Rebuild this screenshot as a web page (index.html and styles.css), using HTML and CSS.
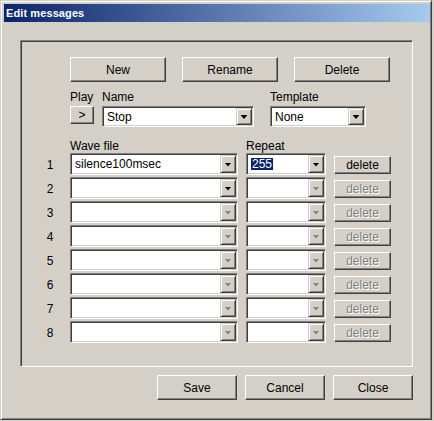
FILE: index.html
```html
<!DOCTYPE html>
<html>
<head>
<meta charset="utf-8">
<link rel="stylesheet" href="styles.css">
</head>
<body>
<div class="window">
  <div class="titlebar"><span class="title">Edit messages</span></div>
  <div class="group">
    <div class="toolbar">
      <button class="btn btn-big">New</button>
      <button class="btn btn-big">Rename</button>
      <button class="btn btn-big">Delete</button>
    </div>
    <div class="fields">
      <div class="field f-play">
        <div class="label">Play</div>
        <button class="btn btn-play">&gt;</button>
      </div>
      <div class="field f-name">
        <div class="label">Name</div>
        <div class="combo combo-top"><span class="combo-text">Stop</span><span class="drop"><span class="arrow"></span></span></div>
      </div>
      <div class="field f-template">
        <div class="label">Template</div>
        <div class="combo combo-top"><span class="combo-text">None</span><span class="drop"><span class="arrow"></span></span></div>
      </div>
    </div>
    <div class="list-head">
      <span class="h-wave">Wave file</span>
      <span class="h-repeat">Repeat</span>
    </div>
    <div class="rows">
      <div class="row">
        <span class="num">1</span>
        <div class="combo c-wave"><span class="combo-text">silence100msec</span><span class="drop"><span class="arrow"></span></span></div>
        <div class="combo c-repeat"><span class="combo-text"><span class="sel">255</span></span><span class="drop"><span class="arrow"></span></span></div>
        <button class="btn btn-del">delete</button>
      </div>
      <div class="row">
        <span class="num">2</span>
        <div class="combo c-wave"><span class="combo-text"></span><span class="drop"><span class="arrow"></span></span></div>
        <div class="combo c-repeat"><span class="combo-text"></span><span class="drop"><span class="arrow off"></span></span></div>
        <button class="btn btn-del disabled">delete</button>
      </div>
      <div class="row">
        <span class="num">3</span>
        <div class="combo c-wave"><span class="combo-text"></span><span class="drop"><span class="arrow off"></span></span></div>
        <div class="combo c-repeat"><span class="combo-text"></span><span class="drop"><span class="arrow off"></span></span></div>
        <button class="btn btn-del disabled">delete</button>
      </div>
      <div class="row">
        <span class="num">4</span>
        <div class="combo c-wave"><span class="combo-text"></span><span class="drop"><span class="arrow off"></span></span></div>
        <div class="combo c-repeat"><span class="combo-text"></span><span class="drop"><span class="arrow off"></span></span></div>
        <button class="btn btn-del disabled">delete</button>
      </div>
      <div class="row">
        <span class="num">5</span>
        <div class="combo c-wave"><span class="combo-text"></span><span class="drop"><span class="arrow off"></span></span></div>
        <div class="combo c-repeat"><span class="combo-text"></span><span class="drop"><span class="arrow off"></span></span></div>
        <button class="btn btn-del disabled">delete</button>
      </div>
      <div class="row">
        <span class="num">6</span>
        <div class="combo c-wave"><span class="combo-text"></span><span class="drop"><span class="arrow off"></span></span></div>
        <div class="combo c-repeat"><span class="combo-text"></span><span class="drop"><span class="arrow off"></span></span></div>
        <button class="btn btn-del disabled">delete</button>
      </div>
      <div class="row">
        <span class="num">7</span>
        <div class="combo c-wave"><span class="combo-text"></span><span class="drop"><span class="arrow off"></span></span></div>
        <div class="combo c-repeat"><span class="combo-text"></span><span class="drop"><span class="arrow off"></span></span></div>
        <button class="btn btn-del disabled">delete</button>
      </div>
      <div class="row">
        <span class="num">8</span>
        <div class="combo c-wave"><span class="combo-text"></span><span class="drop"><span class="arrow off"></span></span></div>
        <div class="combo c-repeat"><span class="combo-text"></span><span class="drop"><span class="arrow off"></span></span></div>
        <button class="btn btn-del disabled">delete</button>
      </div>
    </div>
  </div>
  <div class="footer">
    <button class="btn btn-foot">Save</button>
    <button class="btn btn-foot">Cancel</button>
    <button class="btn btn-foot">Close</button>
  </div>
</div>
</body>
</html>
```

FILE: styles.css
```css
html, body {
  margin: 0;
  padding: 0;
  background: #d4d0c8;
}
body {
  font-family: "Liberation Sans", Arial, sans-serif;
  font-size: 12px;
  color: #000;
}
.window {
  box-sizing: border-box;
  width: 432px;
  height: 420px;
  background: #d4d0c8;
  border: 1px solid;
  border-color: #d4d0c8 #404040 #404040 #d4d0c8;
  box-shadow: inset 1px 1px #fff, inset -1px -1px #808080;
  padding: 3px 1px 0 3px;
}
.titlebar {
  height: 18px;
  background: linear-gradient(to right, #0a246a, #a6caf0);
  display: flex;
  align-items: center;
  padding-left: 2px;
}
.title {
  color: #fff;
  font-weight: bold;
  font-size: 11px;
  letter-spacing: 0.1px;
  line-height: 18px;
}
.group {
  box-sizing: border-box;
  margin: 18px 0 0 16px;
  width: 393px;
  height: 327px;
  border: 1px solid;
  border-color: #808080 #fff #fff #808080;
  box-shadow: inset 1px 1px #404040, inset -1px -1px #d4d0c8;
  padding: 16px 0 0 21px;
}
.btn {
  box-sizing: border-box;
  font-family: "Liberation Sans", Arial, sans-serif;
  font-size: 12px;
  color: #000;
  background: #d4d0c8;
  border: 1px solid;
  border-color: #fff #404040 #404040 #fff;
  box-shadow: inset -1px -1px #808080;
  padding: 0;
  margin: 0;
  display: flex;
  align-items: center;
  justify-content: center;
}
.toolbar {
  display: flex;
  gap: 16px;
  margin-left: 28px;
}
.btn-big {
  width: 96px;
  height: 25px;
}
.fields {
  display: flex;
  margin-left: 28px;
  margin-top: 8px;
}
.field {
  display: flex;
  flex-direction: column;
}
.label {
  line-height: 14px;
  height: 14px;
  margin-bottom: 2px;
}
.f-play { width: 32px; }
.f-name { width: 152px; margin-right: 16px; }
.f-template { width: 96px; }
.btn-play {
  width: 24px;
  height: 18px;
}
.combo {
  box-sizing: border-box;
  display: flex;
  height: 22px;
  background: #fff;
  border: 1px solid;
  border-color: #808080 #fff #fff #808080;
  box-shadow: inset 1px 1px #404040, inset -1px -1px #d4d0c8;
  padding: 1px;
}
.combo-top { height: 21px; }
.combo-text {
  flex: 1;
  display: flex;
  align-items: center;
  padding-left: 3px;
  white-space: nowrap;
  overflow: hidden;
}
.sel {
  background: #0a246a;
  color: #fff;
  padding: 0 1px;
  line-height: 12px;
}
.drop {
  box-sizing: border-box;
  width: 16px;
  flex: none;
  background: #d4d0c8;
  border: 1px solid;
  border-color: #d4d0c8 #404040 #404040 #d4d0c8;
  box-shadow: inset 1px 1px #fff, inset -1px -1px #808080;
  display: flex;
  align-items: center;
  justify-content: center;
}
.arrow {
  width: 7px;
  height: 4px;
  background: #000;
  clip-path: polygon(0 0, 100% 0, 50% 100%);
  margin-top: 1px;
}
.arrow.off {
  background: #808080;
}
.list-head {
  display: flex;
  margin-left: 28px;
  margin-top: 12px;
  line-height: 14px;
  height: 14px;
}
.h-wave { width: 176px; }
.rows {
  display: flex;
  flex-direction: column;
  gap: 2px;
}
.row {
  display: flex;
  align-items: center;
  height: 22px;
}
.num {
  width: 16px;
  margin-right: 12px;
  text-align: center;
  padding-top: 2px;
}
.c-wave { width: 168px; margin-right: 8px; }
.c-repeat { width: 80px; margin-right: 8px; }
.btn-del {
  width: 57px;
  height: 18px;
  margin-top: 2px;
}
.btn-del.disabled {
  color: #808080;
  text-shadow: 1px 1px #fff;
}
.footer {
  display: flex;
  justify-content: flex-end;
  gap: 8px;
  width: 393px;
  margin: 8px 0 0 16px;
}
.btn-foot {
  width: 80px;
  height: 25px;
}
```
